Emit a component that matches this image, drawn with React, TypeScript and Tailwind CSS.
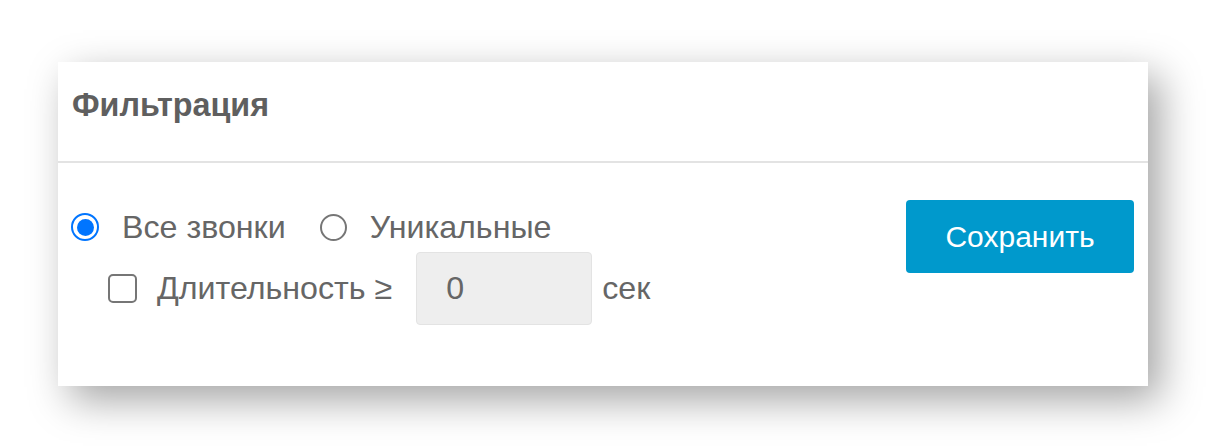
export default function App() {
  return (
    <div className="min-h-[448px] w-[1206px] bg-white pl-[58px] pt-[62px] font-['Liberation_Sans',Arial,sans-serif]">
      <div className="flex h-[324px] w-[1090px] flex-col bg-white shadow-[12px_14px_38px_rgba(0,0,0,0.36)]">
        {/* Header */}
        <div className="flex h-[101px] items-center border-b-2 border-[#e3e3e3] pb-[12px] pl-[14px]">
          <h2 className="text-[32.3px] font-bold text-[#5f5f5f]">Фильтрация</h2>
        </div>

        {/* Body */}
        <div className="flex items-start justify-between pl-[13px] pr-[14px] pt-[37px]">
          <div className="mt-[4px] flex flex-col gap-[2px] text-[32.2px] text-[#666666]">
            <div className="flex h-[46px] items-center">
              <span className="flex h-[28px] w-[28px] items-center justify-center rounded-full border-[2.5px] border-[#0075ff]">
                <span className="h-[17px] w-[17px] rounded-full bg-[#0075ff]" />
              </span>
              <span className="ml-[23px]">Все звонки</span>
              <span className="ml-[34px] h-[27px] w-[27px] rounded-full border-2 border-[#767676]" />
              <span className="ml-[23px]">Уникальные</span>
            </div>
            <div className="flex h-[73px] items-center pl-[37px]">
              <span className="h-[29px] w-[29px] rounded-[5px] border-2 border-[#767676]" />
              <span className="ml-[20px]">Длительность ≥</span>
              <div className="ml-[24px] flex h-[73px] w-[176px] items-center rounded-[4px] border border-[#e3e3e3] bg-[#eeeeee] pl-[29px] text-[#666666]">
                0
              </div>
              <span className="ml-[10px]">сек</span>
            </div>
          </div>
          <button className="flex h-[73px] w-[228px] items-center justify-center rounded-[4px] bg-[#0099cc] text-[30px] text-white">
            Сохранить
          </button>
        </div>
      </div>
    </div>
  );
}
